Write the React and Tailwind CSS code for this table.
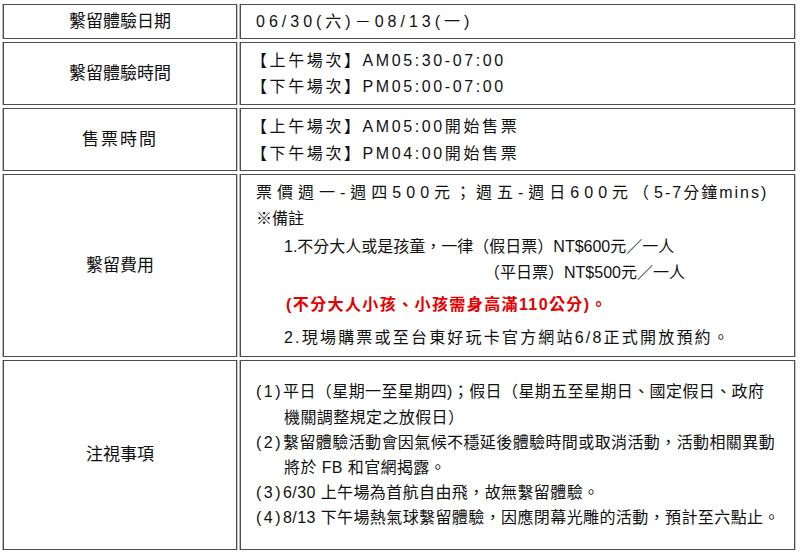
import React from "react";

const font = { fontFamily: '"Liberation Sans", "Noto Sans CJK TC", sans-serif' };

function Cell({ children, className = "" }) {
  return (
    <div
      className={`border border-[#4d4d4d] shadow-[-1px_0_0_#b5b5b5,1px_0_0_#c8c8c8] bg-white ${className}`}
    >
      {children}
    </div>
  );
}

function Row({ label, height, labelClass = "", children }) {
  return (
    <div className={`flex gap-[3px] ${height}`}>
      <Cell
        className={`w-[234px] shrink-0 flex items-center justify-center text-[17px] text-[#111] ${labelClass}`}
      >
        {label}
      </Cell>
      <Cell className="flex-1 flex flex-col justify-center pl-[15px] text-[#111]">{children}</Cell>
    </div>
  );
}

function Num({ n }) {
  return <span className="tracking-[2.5px]">({n})</span>;
}

export default function App() {
  return (
    <div className="w-[800px] h-[554px] bg-white pl-[3px] pr-[5px] pt-[4px]" style={font}>
      <div className="flex flex-col gap-[3px]">
        <Row label="繫留體驗日期" height="h-[35px]">
          <p className="text-[16px] tracking-[4px]">06/30(六)－08/13(一)</p>
        </Row>

        <Row label="繫留體驗時間" height="h-[63px]">
          <div className="text-[16px] tracking-[2.6px] leading-[26px] -ml-[5px]">
            <p>【上午場次】AM05:30-07:00</p>
            <p>【下午場次】PM05:00-07:00</p>
          </div>
        </Row>

        <Row label="售票時間" height="h-[63px]" labelClass="tracking-[2px]">
          <div className="text-[16px] tracking-[2.6px] leading-[27px] -ml-[5px]">
            <p>【上午場次】AM05:00開始售票</p>
            <p>【下午場次】PM04:00開始售票</p>
          </div>
        </Row>

        <Row label="繫留費用" height="h-[183px]">
          <div className="text-[16px] leading-[26px]">
            <p>
              <span className="tracking-[5px]">票價週一-週四500元；週五-週日600元（</span>
              <span className="tracking-[2px]">5-7分鐘mins)</span>
            </p>
            <p>※備註</p>
            <p className="pl-[28px] mt-[2px]">1.不分大人或是孩童，一律（假日票）NT$600元／一人</p>
            <p className="pl-[228px]">（平日票）NT$500元／一人</p>
            <p className="pl-[30px] mt-[6px] font-bold tracking-[1.4px] text-[#e60000]">
              (不分大人小孩、小孩需身高滿110公分)。
            </p>
            <p className="pl-[28px] mt-[7px] tracking-[2.2px]">2.現場購票或至台東好玩卡官方網站6/8正式開放預約。</p>
          </div>
        </Row>

        <Row label="注視事項" height="h-[190px]">
          <div className="text-[16px] leading-[25.2px] tracking-[0.4px] whitespace-nowrap">
            <p><Num n="1" />平日（星期一至星期四)；假日（星期五至星期日、國定假日、政府</p>
            <p className="pl-[28px]">機關調整規定之放假日）</p>
            <p><Num n="2" />繫留體驗活動會因氣候不穩延後體驗時間或取消活動，活動相關異動</p>
            <p className="pl-[28px]">將於 FB 和官網揭露。</p>
            <p><Num n="3" />6/30 上午場為首航自由飛，故無繫留體驗。</p>
            <p><Num n="4" />8/13 下午場熱氣球繫留體驗，因應閉幕光雕的活動，預計至六點止。</p>
          </div>
        </Row>
      </div>
    </div>
  );
}
